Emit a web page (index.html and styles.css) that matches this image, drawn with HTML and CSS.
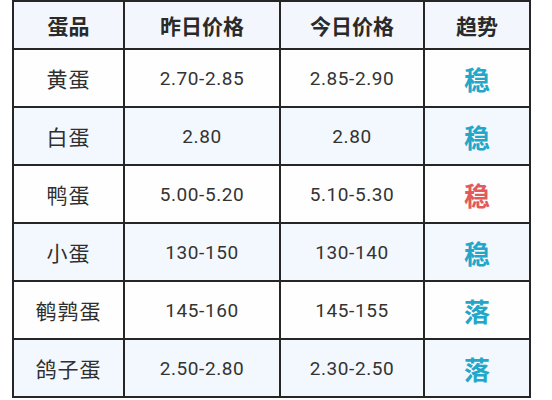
FILE: index.html
```html
<!DOCTYPE html>
<html lang="zh">
<head>
<meta charset="utf-8">
<link rel="stylesheet" href="styles.css">
</head>
<body>
<table class="price-table">
  <colgroup>
    <col class="c1"><col class="c2"><col class="c3"><col class="c4">
  </colgroup>
  <thead>
    <tr><th>蛋品</th><th>昨日价格</th><th>今日价格</th><th>趋势</th></tr>
  </thead>
  <tbody>
    <tr><td class="name">黄蛋</td><td class="num">2.70-2.85</td><td class="num">2.85-2.90</td><td class="trend teal">稳</td></tr>
    <tr class="alt"><td class="name">白蛋</td><td class="num">2.80</td><td class="num">2.80</td><td class="trend teal">稳</td></tr>
    <tr><td class="name">鸭蛋</td><td class="num">5.00-5.20</td><td class="num">5.10-5.30</td><td class="trend red">稳</td></tr>
    <tr class="alt"><td class="name">小蛋</td><td class="num">130-150</td><td class="num">130-140</td><td class="trend teal">稳</td></tr>
    <tr><td class="name">鹌鹑蛋</td><td class="num">145-160</td><td class="num">145-155</td><td class="trend teal">落</td></tr>
    <tr class="alt"><td class="name">鸽子蛋</td><td class="num">2.50-2.80</td><td class="num">2.30-2.50</td><td class="trend teal">落</td></tr>
  </tbody>
</table>
</body>
</html>
```
FILE: styles.css
```css
html, body {
  margin: 0;
  padding: 0;
  background: #ffffff;
}
body {
  padding-left: 12px;
  font-family: "Noto Sans CJK SC", sans-serif;
  color: #2f2f2f;
}
.price-table {
  border-collapse: collapse;
  table-layout: fixed;
  width: 517px;
}
.c1 { width: 111px; }
.c2 { width: 156px; }
.c3 { width: 144px; }
.c4 { width: 106px; }
.price-table th,
.price-table td {
  border: 2px solid #262626;
  text-align: center;
  padding: 0;
}
.price-table thead tr {
  height: 48px;
  background: #f3f7fd;
}
.price-table th {
  font-size: 21px;
  font-weight: 700;
  color: #2a2a2a;
}
.price-table tbody tr {
  height: 58px;
  background: #fefefe;
}
.price-table tbody tr.alt {
  background: #f3f8fe;
}
.name {
  font-size: 21px;
  letter-spacing: 1px;
}
.num {
  font-family: Roboto, "Noto Sans", sans-serif;
  font-size: 19px;
  letter-spacing: 0.6px;
  color: #333;
}
.trend {
  font-size: 26px;
  font-weight: 700;
}
.teal { color: #22a7c9; }
.red { color: #e35a5c; }
```
